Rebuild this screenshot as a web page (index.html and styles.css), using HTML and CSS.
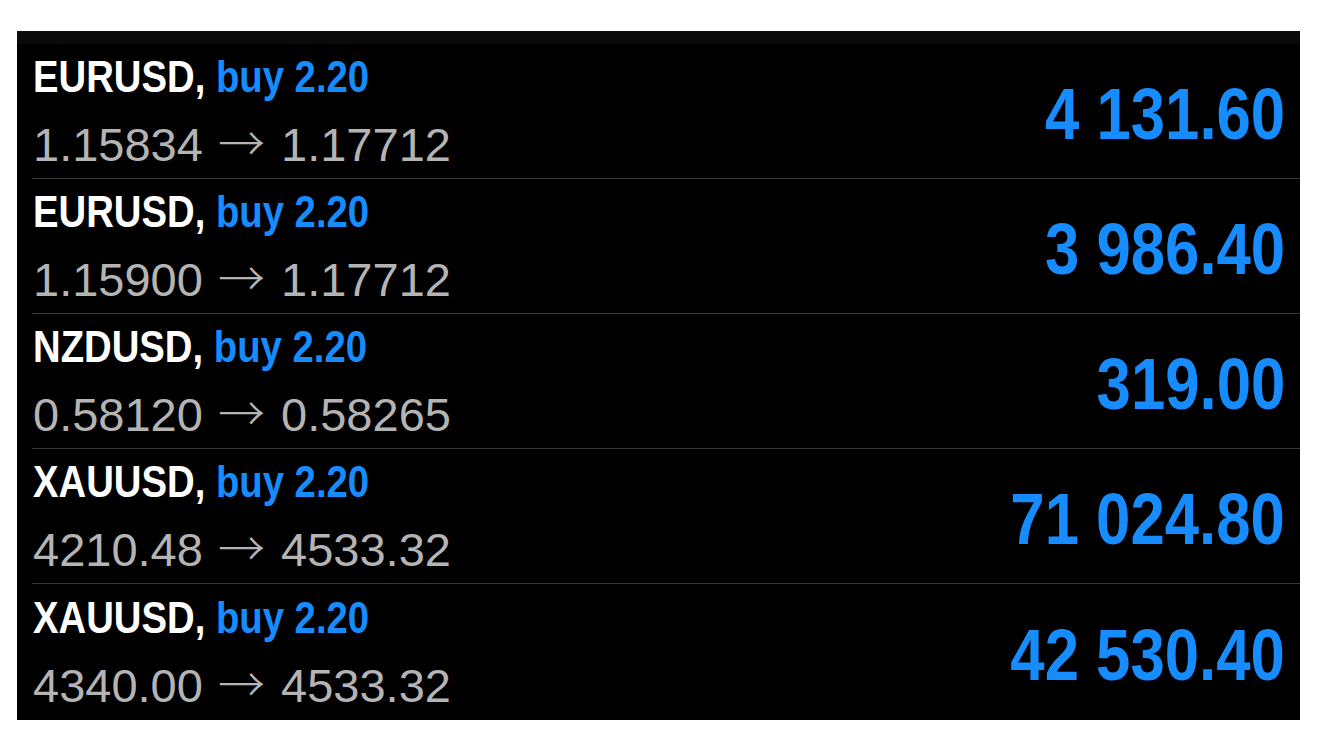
FILE: index.html
```html
<!doctype html>
<html lang="en">
<head>
  <meta charset="utf-8">
  <title>Positions</title>
  <link rel="stylesheet" href="styles.css">
</head>
<body>
  <section class="positions">
    <div class="positions-top"></div>
    <ul class="position-list">
      <li class="position">
        <div class="position-row">
          <div class="position-info">
            <div class="position-title">EURUSD, <span class="position-side">buy 2.20</span></div>
            <div class="position-prices">1.15834 <span class="arrow">&rarr;</span> 1.17712</div>
          </div>
          <div class="position-profit">4 131.60</div>
        </div>
      </li>
      <li class="position">
        <div class="position-row">
          <div class="position-info">
            <div class="position-title">EURUSD, <span class="position-side">buy 2.20</span></div>
            <div class="position-prices">1.15900 <span class="arrow">&rarr;</span> 1.17712</div>
          </div>
          <div class="position-profit">3 986.40</div>
        </div>
      </li>
      <li class="position">
        <div class="position-row">
          <div class="position-info">
            <div class="position-title">NZDUSD, <span class="position-side">buy 2.20</span></div>
            <div class="position-prices">0.58120 <span class="arrow">&rarr;</span> 0.58265</div>
          </div>
          <div class="position-profit">319.00</div>
        </div>
      </li>
      <li class="position">
        <div class="position-row">
          <div class="position-info">
            <div class="position-title">XAUUSD, <span class="position-side">buy 2.20</span></div>
            <div class="position-prices">4210.48 <span class="arrow">&rarr;</span> 4533.32</div>
          </div>
          <div class="position-profit">71 024.80</div>
        </div>
      </li>
      <li class="position">
        <div class="position-row">
          <div class="position-info">
            <div class="position-title">XAUUSD, <span class="position-side">buy 2.20</span></div>
            <div class="position-prices">4340.00 <span class="arrow">&rarr;</span> 4533.32</div>
          </div>
          <div class="position-profit">42 530.40</div>
        </div>
      </li>
    </ul>
  </section>
</body>
</html>
```

FILE: styles.css
```css
:root {
  --page: #fff;
  --panel: #000;
  --panel-top: #0a0a0a;
  --divider: #3a3a3c;
  --title: #fff;
  --blue: #168cff;
  --muted: #b4b4b4;
}

*,
*::before,
*::after {
  box-sizing: border-box;
}

body {
  background: var(--page);
  margin: 0;
  padding: 31px 36px 0 17px;
  font-family: "Liberation Sans", Arial, sans-serif;
}

.positions {
  background: var(--panel);
  width: 1283px;
}

.positions-top {
  background: var(--panel-top);
  height: 13px;
}

.position-list {
  list-style: none;
  margin: 0;
  padding: 0;
}

.position {
  padding-left: 15px;
}

.position-row {
  align-items: center;
  border-bottom: 1px solid var(--divider);
  display: flex;
  height: 135px;
  justify-content: space-between;
  padding: 0 15px 0 1px;
}

.position:last-child .position-row {
  border-bottom: 0;
  height: 136px;
}

/* no condensed face is installed, so squeeze the bold one */
.position-title {
  color: var(--title);
  font-size: 44px;
  font-weight: 700;
  line-height: 44px;
  transform: scaleX(0.87);
  transform-origin: left center;
  white-space: nowrap;
}

.position-side {
  color: var(--blue);
}

.position-prices {
  color: var(--muted);
  font-size: 47px;
  line-height: 46px;
  margin-top: 19px;
  white-space: nowrap;
}

.arrow {
  font-family: "Noto Sans CJK JP", "DejaVu Sans", sans-serif;
  font-size: 47px;
  font-weight: 300;
  margin: 0 3px 0 2px;
}

.position-profit {
  color: var(--blue);
  font-size: 73px;
  font-weight: 700;
  line-height: 73px;
  margin-top: 5px;
  transform: scaleX(0.845);
  transform-origin: right center;
  white-space: nowrap;
}
```
